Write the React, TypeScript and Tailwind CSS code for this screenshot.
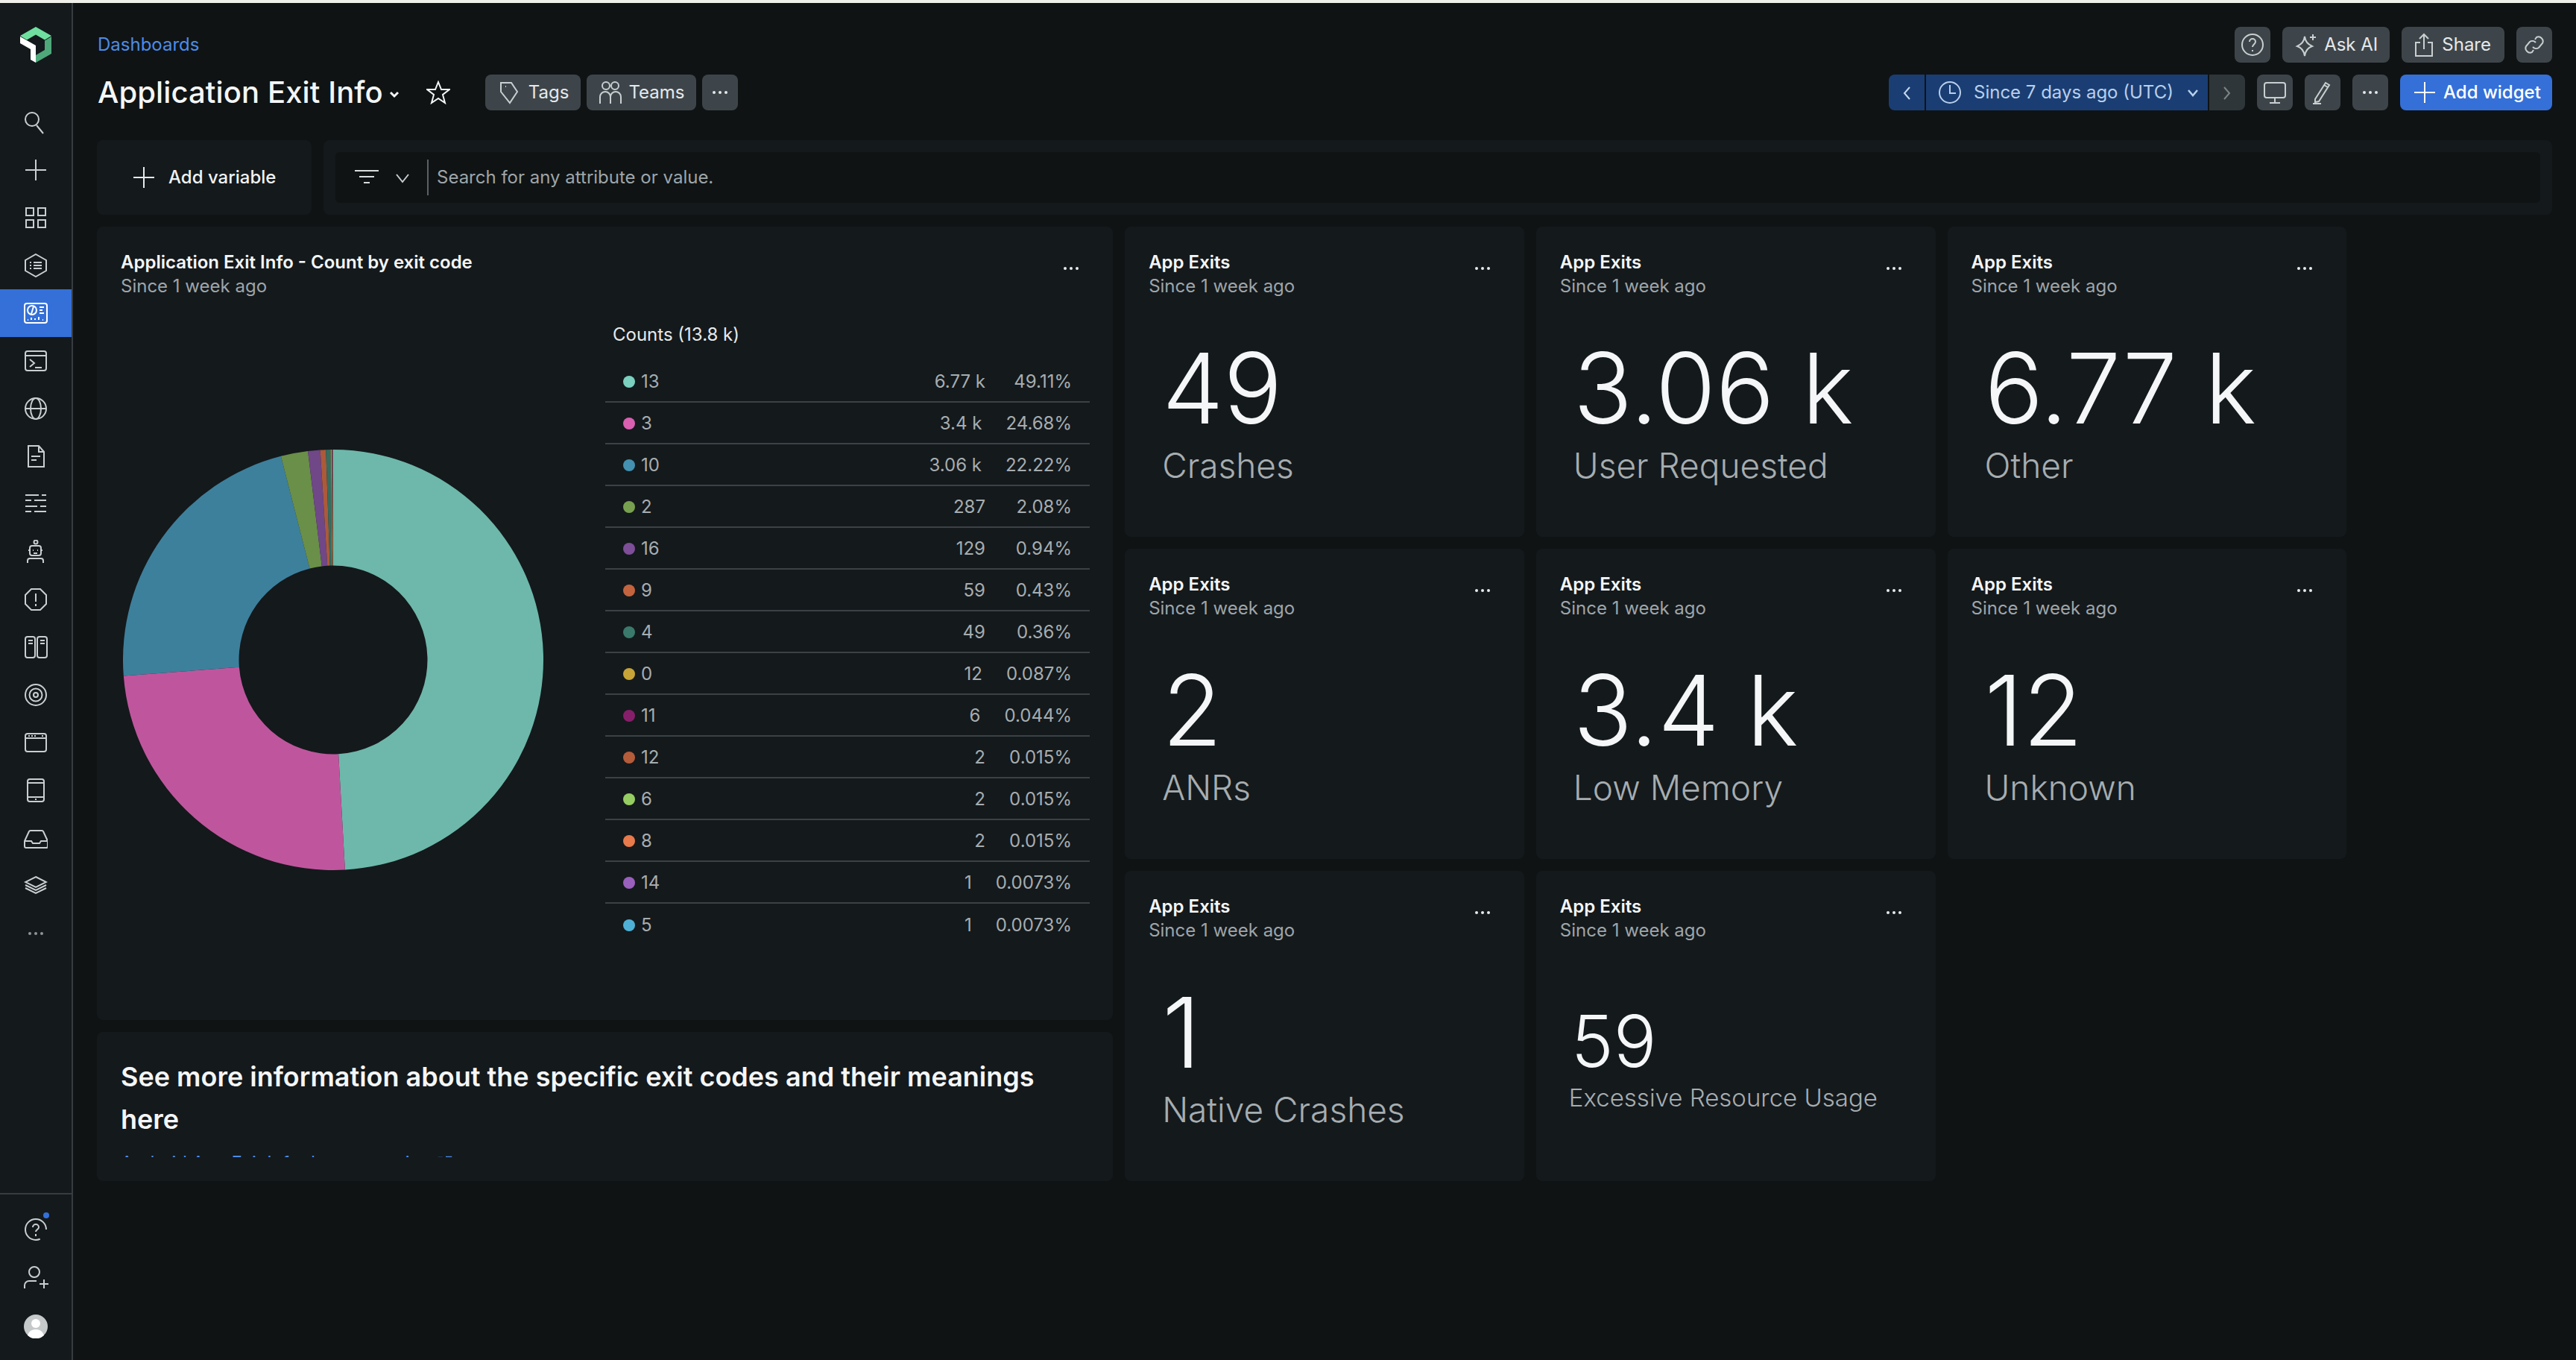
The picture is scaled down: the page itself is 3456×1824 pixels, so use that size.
import React from "react";

const S = ({ children, w = 32, h = 32, vb, c = "#c9cfd1", sw = 2, cls = "" }: any) => (
  <svg width={w} height={h} viewBox={vb || `0 0 ${w} ${h}`} fill="none" stroke={c} strokeWidth={sw} className={"shrink-0 " + cls}>
    {children}
  </svg>
);

const navIcons: React.ReactNode[] = [
  <S key="s"><circle cx="11" cy="12" r="9" /><path d="M17 20l9 11" /></S>,
  <S key="p"><path d="M16 2v28M2 16h28" /></S>,
  <S key="g"><rect x="3" y="3" width="10" height="10" /><rect x="19" y="3" width="10" height="10" /><rect x="3" y="19" width="10" height="10" /><rect x="19" y="19" width="10" height="10" /></S>,
  <S key="h"><path d="M16 1l14 8v14l-14 8-14-8V9z" /><path d="M8 12h2M13 12h11M8 16h2M13 16h11M8 20h2M13 20h11" /></S>,
  <S key="d" c="#ffffff"><rect x="1" y="3" width="30" height="26" rx="3" /><circle cx="11" cy="12" r="6" /><path d="M13 7l-3 10M21 8h6M21 12h4M21 16h6M5 25h1M10 25v-3M15 25v-2M20 25v-4M25 25h1" /></S>,
  <S key="t"><rect x="2" y="3" width="28" height="26" rx="3" /><path d="M2 9h28M8 14l6 5-6 5M15 25h9" /></S>,
  <S key="gl"><circle cx="16" cy="16" r="14" /><ellipse cx="16" cy="16" rx="7" ry="14" /><path d="M2 16h28" /></S>,
  <S key="f"><path d="M6 2h14l7 8v20H6z" /><path d="M20 2v8h7M10 16h12M10 21h7" /></S>,
  <S key="l"><path d="M2 4h18M24 4h6M2 11h8M14 11h16M2 19h16M22 19h8M2 26h8M14 26h16" /></S>,
  <S key="r"><circle cx="16" cy="3" r="2.5" /><rect x="8" y="8" width="15" height="13" rx="3" /><path d="M6 14h2M23 14h2M12 14h1M18 14h1M13 18h5M5 31v-3a3 3 0 013-3h15a3 3 0 013 3v3" /></S>,
  <S key="o"><path d="M10 2h12l8 8v12l-8 8H10l-8-8V10z" /><path d="M16 8v11M16 22v3" /></S>,
  <S key="c"><rect x="2" y="2" width="13" height="28" rx="3" /><rect x="18" y="2" width="13" height="28" rx="3" /><path d="M6 7h6M6 11h6M22 7h6M22 11h6" /></S>,
  <S key="tg"><circle cx="16" cy="16" r="14" /><circle cx="16" cy="16" r="8.5" /><circle cx="16" cy="16" r="3" /></S>,
  <S key="b"><rect x="2" y="4" width="28" height="24" rx="3" /><path d="M2 10h28M6 7h2M10 7h2M14 7h2M24 7h2" /></S>,
  <S key="tb"><rect x="5" y="1" width="22" height="30" rx="3" /><path d="M5 6h22M5 25h22M15 28h2" /></S>,
  <S key="i"><path d="M1 20l6-13a2 2 0 012-1h15a2 2 0 012 1l6 13v7a2 2 0 01-2 2H3a2 2 0 01-2-2z" /><path d="M1 20h9l2 3h9l2-3h9" /></S>,
  <S key="st"><path d="M16 4L30 11 16 18 2 11zM2 15l14 7 14-7M2 19l14 7 14-7" /></S>,
  <S key="e" c="#8e9599" sw={0}><circle cx="8" cy="16" r="2" fill="#8e9599" /><circle cx="16" cy="16" r="2" fill="#8e9599" /><circle cx="24" cy="16" r="2" fill="#8e9599" /></S>,
];

const Dots = ({ c = "#e8ebec", cls = "" }: { c?: string; cls?: string }) => (
  <svg width="24" height="24" viewBox="0 0 24 24" fill={c} className={"shrink-0 " + cls}>
    <circle cx="4" cy="12" r="2" /><circle cx="12" cy="12" r="2" /><circle cx="20" cy="12" r="2" />
  </svg>
);

const Btn = ({ children, cls = "" }: any) => (
  <div className={"h-12 rounded-lg bg-[#3e454a] flex items-center justify-center text-[24px] text-[#e6e9ea] " + cls}>{children}</div>
);

const rows = [
  ["13", "6.77 k", "49.11%", 49.11, "#7bd0c0"],
  ["3", "3.4 k", "24.68%", 24.68, "#d95fb1"],
  ["10", "3.06 k", "22.22%", 22.22, "#4490b0"],
  ["2", "287", "2.08%", 2.08, "#78a14f"],
  ["16", "129", "0.94%", 0.94, "#7e4e98"],
  ["9", "59", "0.43%", 0.43, "#c3643f"],
  ["4", "49", "0.36%", 0.36, "#3a7a6c"],
  ["0", "12", "0.087%", 0.087, "#c7a437"],
  ["11", "6", "0.044%", 0.044, "#861f6a"],
  ["12", "2", "0.015%", 0.015, "#b55c3a"],
  ["6", "2", "0.015%", 0.015, "#96cd62"],
  ["8", "2", "0.015%", 0.015, "#e87a4b"],
  ["14", "1", "0.0073%", 0.0073, "#9a60bd"],
  ["5", "1", "0.0073%", 0.0073, "#4fb0d6"],
] as const;

function Donut() {
  const R = 282, r = 126.5, C = 282;
  const total = rows.reduce((a, x) => a + x[3], 0);
  let acc = 0;
  const pt = (rad: number, a: number) => `${C + rad * Math.sin(a)} ${C - rad * Math.cos(a)}`;
  return (
    <svg width="564" height="564" viewBox="0 0 564 564" className="shrink-0">
      {rows.map((x) => {
        const a0 = (acc / total) * Math.PI * 2;
        acc += x[3];
        const a1 = (acc / total) * Math.PI * 2;
        const lg = a1 - a0 > Math.PI ? 1 : 0;
        return (
          <path
            key={x[0]}
            d={`M${pt(r, a0)}L${pt(R, a0)}A${R} ${R} 0 ${lg} 1 ${pt(R, a1)}L${pt(r, a1)}A${r} ${r} 0 ${lg} 0 ${pt(r, a0)}Z`}
            fill={x[4]}
            fillOpacity="0.87"
          />
        );
      })}
    </svg>
  );
}

const CardHead = ({ title }: { title: string }) => (
  <div className="flex items-start justify-between pl-8 pr-[44px] pt-8 shrink-0">
    <div>
      <div className="text-[24px] leading-8 font-semibold text-[#f4f6f7]">{title}</div>
      <div className="text-[24px] leading-8 text-[#9ea5a9]">Since 1 week ago</div>
    </div>
    <Dots cls="mt-3" />
  </div>
);

const stats = [
  { v: "49", l: "Crashes", p: "col-start-6 row-start-1" },
  { v: "3.06 k", l: "User Requested", p: "col-start-8 row-start-1" },
  { v: "6.77 k", l: "Other", p: "col-start-10 row-start-1" },
  { v: "2", l: "ANRs", p: "col-start-6 row-start-3" },
  { v: "3.4 k", l: "Low Memory", p: "col-start-8 row-start-3" },
  { v: "12", l: "Unknown", p: "col-start-10 row-start-3" },
  { v: "1", l: "Native Crashes", p: "col-start-6 row-start-5" },
  { v: "59", l: "Excessive Resource Usage", p: "col-start-8 row-start-5", small: true },
];

export default function App() {
  return (
    <div className="w-[3456px] h-[1824px] overflow-hidden flex flex-col bg-[#0f1314] font-['Inter','Liberation_Sans',sans-serif]">
      <div className="h-1 bg-[#eff0ea] shrink-0" />
      <div className="flex flex-1 min-h-0">
        {/* Sidebar */}
        <aside className="w-[98px] shrink-0 bg-[#14191c] border-r-2 border-[#363c40] flex flex-col">
          <div className="h-32 pt-8 flex justify-center shrink-0">
            <svg width="42" height="48" viewBox="0 0 42 48">
              <path d="M21 0L42 12 33 17.5 21 10.5 9 17.5 0 12z" fill="#6fe09f" />
              <path d="M0 13l21 12v23l-7-4V30L0 22z" fill="#ffffff" />
              <path d="M42 13l-9 5.5V31l-12 7v10l21-12z" fill="#4fa87a" />
            </svg>
          </div>
          {navIcons.map((ic, i) => (
            <div key={i} className={"h-16 shrink-0 flex items-center justify-center " + (i === 4 ? "bg-[#3470d8]" : "")}>{ic}</div>
          ))}
          <div className="mt-auto border-t-2 border-[#363c40] pt-3.5 pb-[13px]">
            <div className="h-[65px] flex items-center justify-center relative">
              <S>
                <circle cx="16" cy="16" r="14" strokeDasharray="72 16" strokeDashoffset="-16" />
                <path d="M12 13a4 4 0 118 0c0 3-4 3-4 6M16 22v3" />
              </S>
              <span className="absolute left-[58px] top-[10px] w-2 h-2 rounded-full bg-[#3470d8]" />
            </div>
            <div className="h-[65px] flex items-center justify-center">
              <S w={34} h={32}>
                <circle cx="15" cy="8" r="7" /><path d="M2 30v-4a6 6 0 016-6h10M22 24h12M28 18v12" />
              </S>
            </div>
            <div className="h-[65px] flex items-center justify-center">
              <svg width="32" height="32" viewBox="0 0 32 32">
                <circle cx="16" cy="16" r="16" fill="#c6c9ca" />
                <circle cx="16" cy="12" r="6" fill="#ffffff" />
                <path d="M5 28c2-6 6-8 11-8s9 2 11 8a16 16 0 01-22 0z" fill="#ffffff" />
              </svg>
            </div>
          </div>
        </aside>

        {/* Main */}
        <main className="flex-1 min-w-0 pl-8 pr-8 pt-8">
          {/* Header */}
          <div className="flex justify-between h-[112px]">
            <div className="flex flex-col pl-px">
              <div className="h-12 flex items-center text-[24px] text-[#4c8ce6]">Dashboards</div>
              <div className="mt-4 h-12 flex items-center">
                <span className="text-[40px] font-medium text-[#f4f6f7] leading-none tracking-[0.1px]">Application Exit Info</span>
                <svg width="14" height="10" viewBox="0 0 14 10" fill="none" stroke="#f4f6f7" strokeWidth="3" className="ml-2 mt-1.5">
                  <path d="M2 2l5 5 5-5" />
                </svg>
                <svg width="32" height="32" viewBox="0 0 32 32" fill="none" stroke="#f4f6f7" strokeWidth="2" className="ml-9">
                  <path d="M16 2l4 10h11l-9 7 3 11-9-6-9 6 3-11-9-7h11z" />
                </svg>
                <div className="flex gap-2 ml-[47px]">
                  <Btn cls="pl-[18px] pr-4 gap-3">
                    <S w={28} h={32}><path d="M3 3h14l8 12-10 15L3 15z" /><path d="M9 8h1" /></S>
                    Tags
                  </Btn>
                  <Btn cls="px-4 gap-2">
                    <S w={32} h={32}><circle cx="10" cy="7" r="5" /><circle cx="22" cy="7" r="5" /><path d="M2 31V22a6 6 0 0114 0v9M16 22a6 6 0 0114 0v9" /></S>
                    Teams
                  </Btn>
                  <Btn cls="w-12"><Dots c="#e6e9ea" /></Btn>
                </div>
              </div>
            </div>
            <div className="flex flex-col items-end">
              <div className="flex gap-4">
                <Btn cls="w-12">
                  <S><circle cx="16" cy="16" r="14" /><path d="M12 12a4 4 0 118 0c0 3-4 4-4 7M16 23v2" /></S>
                </Btn>
                <Btn cls="px-4 gap-2">
                  <S><path d="M14 5c1 7 4 10 10 13-6 2-9 6-10 13-1-7-4-11-10-13 6-3 9-6 10-13z" /><path d="M25 2v8M21 6h8" /></S>
                  Ask AI
                </Btn>
                <Btn cls="px-[18px] gap-3">
                  <S w={24} h={32}><path d="M12 22V2M6 8l6-6 6 6M7 13H1v18h22V13h-6" /></S>
                  Share
                </Btn>
                <Btn cls="w-12">
                  <S w={28} h={32} sw={2}><path d="M12 19a6 6 0 008 1l5-6a6 6 0 00-8-8l-2 3" /><path d="M16 13a6 6 0 00-8-1l-5 6a6 6 0 008 8l2-3" /></S>
                </Btn>
              </div>
              <div className="flex gap-4 mt-4">
                <div className="flex gap-0.5 text-[24px]">
                  <div className="w-12 h-12 bg-[#1a3e73] rounded-l-lg flex items-center justify-center">
                    <S w={12} h={24} c="#c7d8ee"><path d="M10 5l-7 8 7 8" /></S>
                  </div>
                  <div className="w-[378px] h-12 bg-[#1a3e73] flex items-center pl-4 text-[#b9cfec]">
                    <S c="#b9cfec"><circle cx="16" cy="16" r="14" /><path d="M16 6v11h8" /></S>
                    <span className="ml-4">Since 7 days ago (UTC)</span>
                    <S w={16} h={16} c="#b9cfec" sw={2.5} cls="ml-[18px]"><path d="M2 5l6 7 6-7" /></S>
                  </div>
                  <div className="w-12 h-12 bg-[#2f363a] rounded-r-lg flex items-center justify-center">
                    <S w={12} h={24} c="#7c8488"><path d="M2 5l7 8-7 8" /></S>
                  </div>
                </div>
                <Btn cls="w-12">
                  <S><rect x="2" y="3" width="28" height="20" rx="3" /><path d="M16 23v6M9 30h14" /></S>
                </Btn>
                <Btn cls="w-12">
                  <S><path d="M6 25L20 3l5 3-14 22-5 1zM18 6l5 3M3 31h11" /></S>
                </Btn>
                <Btn cls="w-12"><Dots c="#e6e9ea" /></Btn>
                <div className="h-12 w-[204px] rounded-lg bg-[#3470d8] flex items-center pl-[17px] text-[24px] font-medium text-white">
                  <S c="#ffffff"><path d="M16 2v28M2 16h28" /></S>
                  <span className="ml-[9px]">Add widget</span>
                </div>
              </div>
            </div>
          </div>

          {/* Filter bar */}
          <div className="flex gap-4 mt-10 h-[100px]">
            <div className="w-[288px] rounded-lg bg-[#14191c] flex items-center pl-[49px] text-[24px] font-medium text-[#f0f2f3]">
              <S w={28} h={28} c="#e6e9ea"><path d="M14 0v28M0 14h28" /></S>
              <span className="ml-[19px]">Add variable</span>
            </div>
            <div className="flex-1 rounded-lg bg-[#14191c] p-4">
              <div className="h-[68px] rounded-md bg-[#0f1314] flex items-center pl-[26px]">
                <S w={32} h={24} c="#d8dcde"><path d="M0 3h32M6 11h20M12 19h8" /></S>
                <S w={20} h={16} c="#c9cfd1" cls="ml-[22px]"><path d="M2 4l8 10 8-10" /></S>
                <div className="w-0.5 h-12 bg-[#5a6165] ml-[23px]" />
                <span className="ml-[11px] text-[24px] text-[#9ea5a9]">Search for any attribute or value.</span>
              </div>
            </div>
          </div>

          {/* Grid */}
          <div className="grid grid-cols-12 auto-rows-[200px] gap-4 mt-4">
            <section className="col-start-1 col-span-5 row-start-1 row-span-5 rounded-lg bg-[#14191c] flex flex-col">
              <CardHead title="Application Exit Info - Count by exit code" />
              <div className="flex-1 flex min-h-0 pl-[35px]">
                <div className="self-center flex pt-0.5"><Donut /></div>
                <div className="ml-[83px] w-[650px] pt-[33px]">
                  <div className="pl-[10px] text-[24px] leading-8 text-[#e6e9ea]">Counts (13.8 k)</div>
                  <div className="mt-[19px]">
                    {rows.map((x, i) => (
                      <div key={i} className={"h-14 flex items-center pl-6 pr-6 pt-0.5 text-[24px] text-[#a6adb0] " + (i < rows.length - 1 ? "border-b-2 border-[#3b4246]" : "")}>
                        <span className="w-4 h-4 rounded-full shrink-0" style={{ backgroundColor: x[4] }} />
                        <span className="ml-2 flex-1">{x[0]}</span>
                        <span>{x[1]}</span>
                        <span className="min-w-[116px] pl-8 text-right">{x[2]}</span>
                      </div>
                    ))}
                  </div>
                </div>
              </div>
            </section>

            <section className="col-start-1 col-span-5 row-start-6 rounded-lg bg-[#14191c] px-8 pt-8">
              <div className="h-[136px] overflow-hidden">
                <div className="text-[36px] leading-[57px] font-semibold text-[#f4f6f7]">
                  See more information about the specific exit codes and their meanings here
                </div>
                <div className="mt-3 flex items-center gap-2 text-[24px] text-[#4c8ce6]">
                  <span>Android App Exit Info documentation</span>
                  <svg width="22" height="22" viewBox="0 0 22 22" fill="none" stroke="#4c8ce6" strokeWidth="2.5"><path d="M12 3h7v7M19 3L9 13M8 4H3v15h15v-5" /></svg>
                </div>
              </div>
            </section>

            {stats.map((s) => (
              <section key={s.l} className={"col-span-2 row-span-2 rounded-lg bg-[#14191c] flex flex-col " + s.p}>
                <CardHead title="App Exits" />
                {s.small ? (
                  <div className="flex-1 flex flex-col justify-center pl-12 pb-2">
                    <div className="-ml-px text-[96px] leading-[96px] font-light text-[#f4f6f7]">{s.v}</div>
                    <div className="-ml-1 mt-2 text-[33px] leading-10 font-light text-[#a6adb0]">{s.l}</div>
                  </div>
                ) : (
                  <div className="flex-1 flex flex-col justify-center pl-12 pb-3">
                    <div className="ml-0.5 text-[131px] leading-[128px] font-light text-[#f4f6f7]">{s.v}</div>
                    <div className="ml-0.5 mt-[11px] text-[46px] leading-[56px] font-light text-[#a6adb0]">{s.l}</div>
                  </div>
                )}
              </section>
            ))}
          </div>
        </main>
      </div>
    </div>
  );
}
